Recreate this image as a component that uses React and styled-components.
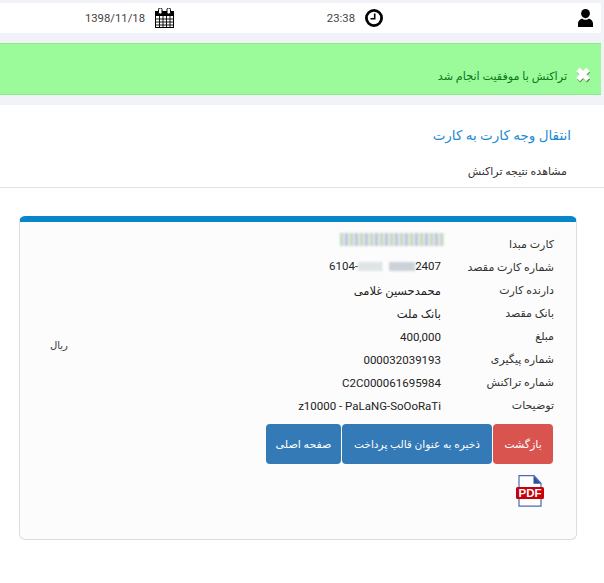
import React from "react";
import styled, { createGlobalStyle } from "styled-components";

const Global = createGlobalStyle`
  html, body { margin: 0; padding: 0; background: #f1f3f8; }
  body { font-family: Roboto, "DejaVu Sans", sans-serif; font-size: 12px; color: #333; }
  * { box-sizing: border-box; }
`;
const Page = styled.div`
  direction: rtl; width: 604px; height: 583px; padding-top: 3px; overflow: hidden;
`;
const TopBar = styled.header`
  height: 30px; width: 601px; background: #fff; display: grid;
  grid-template-columns: 210px 213px 178px; align-items: center; margin-right: 3px;
`;
const TopItem = styled.div`
  display: flex; align-items: center; gap: 10px; color: #444; font-size: 11.3px;
  padding-right: ${p => p.$pad}px; height: 100%;
`;
const Alert = styled.div`
  margin-top: 10px; height: 52px; width: 601px; margin-right: 3px; background: #9bfb9b;
  border-top: 1px solid #8fe88f; border-bottom: 1px solid #8fe88f;
  display: flex; align-items: flex-end; padding: 0 10px 11px 0; gap: 8px;
  color: #08761a; font-size: 11.2px; font-weight: 500;
`;
const Content = styled.main`
  margin-top: 10px; background: #fff; height: 478px; padding-top: 19px;
`;
const Title = styled.h1`
  margin: 0 33px 0 0; font-size: 13.5px; font-weight: 400; color: #1b8bd0; line-height: 22px;
`;
const Sub = styled.div`
  margin-top: 15px; height: 27px; width: 604px; padding: 3px 37px 0 0; font-size: 11px;
  color: #333; border-bottom: 1px solid #e3e3e3; line-height: 16px;
`;
const Card = styled.section`
  margin: 28px 27px 0 0; width: 558px; height: 324px; background: #fcfcfc;
  border: 1px solid #ddd; border-top: 6px solid #0787c9; border-radius: 6px;
  padding: 11px 22px 0 0; display: flex; flex-direction: column;
`;
const Grid = styled.div`
  display: grid; grid-template-columns: 113px 1fr; grid-auto-rows: 23px; position: relative;
`;
const Label = styled.div`
  font-size: 11px; color: #333; line-height: 20px; padding-top: 2px;
`;
const Value = styled.div`
  font-size: 11.5px; font-weight: 400; color: #222; line-height: 18px; display: flex;
  justify-content: flex-start; padding-top: 3px;
`;
const Ltr = styled.span`
  direction: ltr; unicode-bidi: isolate; display: inline-flex; align-items: center;
  height: 18px; margin-top: ${p => p.$up ? -p.$up : 0}px; margin-right: ${p => p.$shift || 0}px;
`;
const Blur = styled.span`
  display: inline-block; width: ${p => p.$w}px; height: ${p => p.$h}px;
  background: ${p => p.$bg}; filter: blur(1px);
`;
const Rial = styled.span`
  position: absolute; left: 30px; top: 105px; font-size: 10px; font-weight: 500; color: #333; line-height: 16px;
`;
const Buttons = styled.div`
  display: flex; gap: 1px; margin: 7px 1px 0 0;
`;
const Btn = styled.button`
  height: 40px; width: ${p => p.$w}px; padding: 0; border: 0; border-radius: 4px;
  font: 400 ${p => p.$size}px Roboto, "DejaVu Sans", sans-serif; color: #fff; background: ${p => p.$bg};
`;
const PdfWrap = styled.div`
  margin: 11px 9px 0 0; height: 32px; width: 30px;
`;

const User = () => (
  <svg width="15" height="18" viewBox="0 0 15 18"><ellipse cx="7.5" cy="4.6" rx="4.4" ry="4.6" /><path d="M0 18v-3.5C0 11.5 2 10.2 4.2 9.4c1 1.8 5.6 1.8 6.6 0C13 10.2 15 11.5 15 14.5V18z" /></svg>
);
const Clock = () => (
  <svg width="18" height="18" viewBox="0 0 18 18"><circle cx="9" cy="9" r="7.6" fill="#fff" stroke="#000" strokeWidth="2.8" /><path d="M9.7 4.5v5.2H5.5" fill="none" stroke="#000" strokeWidth="1.6" /></svg>
);
const Calendar = () => (
  <svg width="19" height="20" viewBox="0 0 19 20">
    <rect x=".5" y="3.5" width="18" height="16" fill="#fff" stroke="#000" />
    <rect x="0" y="3" width="19" height="5" />
    <rect x="3.5" y="0" width="3.5" height="6" rx="1.5" fill="#fff" stroke="#000" />
    <rect x="12" y="0" width="3.5" height="6" rx="1.5" fill="#fff" stroke="#000" />
    <path d="M1 11h17M1 14h17M1 17h17M4.5 8v11M8 8v11M11.5 8v11M15 8v11" stroke="#000" strokeWidth=".9" />
  </svg>
);
const Cross = () => (
  <svg width="16" height="16" viewBox="0 0 16 16"><path d="M3 3l10 10M13 3L3 13" stroke="#5f8f5f" strokeWidth="4.4" transform="translate(.6 1)" /><path d="M3 2.5l10 10M13 2.5l-10 10" stroke="#fff" strokeWidth="5" /></svg>
);
const Pdf = () => (
  <svg width="30" height="32" viewBox="0 0 30 32">
    <path d="M4 .7h15l7 7.5v23H4z" fill="#fff" stroke="#4a69b5" strokeWidth="1.2" />
    <path d="M18.5 .7l7.5 8h-7.5z" fill="#2f4f9f" />
    <rect x="1" y="12" width="28" height="12" rx="1.5" fill="#c8000a" />
    <text x="15" y="22" textAnchor="middle" direction="ltr" fontFamily="Liberation Sans" fontWeight="700" fontSize="11.5" fill="#fff">PDF</text>
  </svg>
);

const stripes = "repeating-linear-gradient(90deg,#c3d8c0 0 3px,#e6e8ee 3px 5px,#bcc6d8 5px 8px,#eceee6 8px 10px)";
const rows = [
  ["کارت مبدا", <Ltr $up={6} $shift={-3}><Blur $w={104} $h={13} $bg={stripes} /></Ltr>],
  ["شماره کارت مقصد", <Ltr $up={2}>6104-<Blur $w={25} $h={9} $bg="#dfe5e5" /><Blur $w={6} $h={9} $bg="#fcfcfc" /><Blur $w={26} $h={9} $bg="#cbd2d8" />2407</Ltr>],
  ["دارنده کارت", "محمدحسین غلامی"],
  ["بانک مقصد", "بانک ملت"],
  ["مبلغ", <Ltr>400,000</Ltr>],
  ["شماره پیگیری", <Ltr>000032039193</Ltr>],
  ["شماره تراکنش", <Ltr>C2C000061695984</Ltr>],
  ["توضیحات", <Ltr>z10000 - PaLaNG-SoOoRaTi</Ltr>],
];

export default function App() {
  return (
    <Page>
      <Global />
      <TopBar>
        <TopItem $pad={8}><User /></TopItem>
        <TopItem $pad={8}><Clock /><span>23:38</span></TopItem>
        <TopItem $pad={4}><Calendar /><span>1398/11/18</span></TopItem>
      </TopBar>
      <Alert><Cross /><span>تراکنش با موفقیت انجام شد</span></Alert>
      <Content>
        <Title>انتقال وجه کارت به کارت</Title>
        <Sub>مشاهده نتیجه تراکنش</Sub>
        <Card>
          <Grid>
            {rows.map(([l, v]) => (
              <React.Fragment key={l}><Label>{l}</Label><Value>{v}</Value></React.Fragment>
            ))}
            <Rial>ریال</Rial>
          </Grid>
          <Buttons>
            <Btn $w={60} $size={11} $bg="#d9534f">بازگشت</Btn>
            <Btn $w={150} $size={10.6} $bg="#337ab7">ذخیره به عنوان قالب پرداخت</Btn>
            <Btn $w={75} $size={11} $bg="#337ab7">صفحه اصلی</Btn>
          </Buttons>
          <PdfWrap><Pdf /></PdfWrap>
        </Card>
      </Content>
    </Page>
  );
}
